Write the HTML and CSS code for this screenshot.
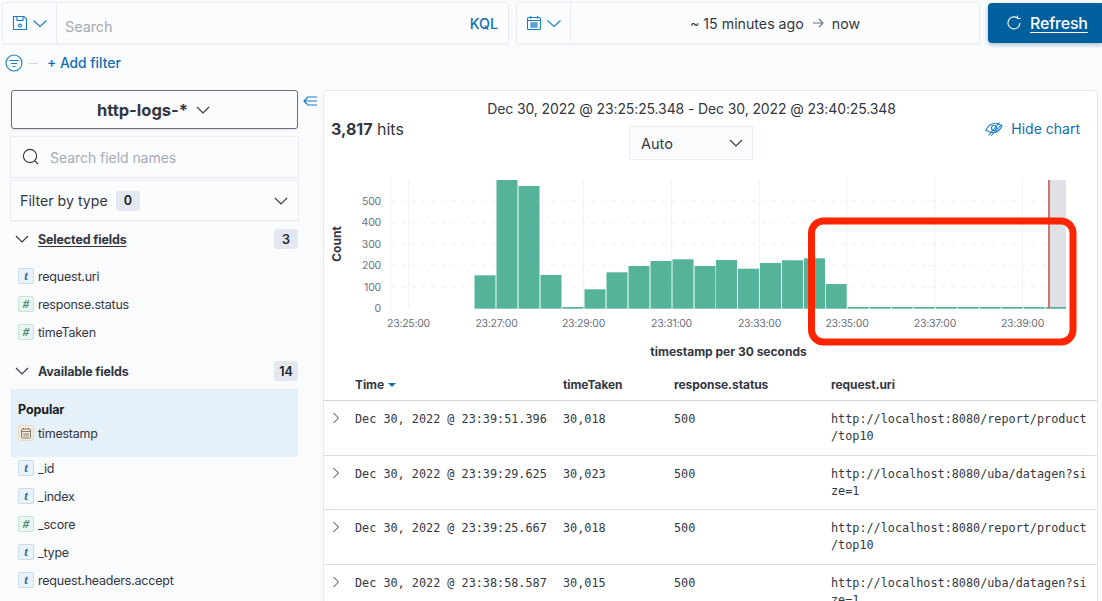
FILE: index.html
```html
<!DOCTYPE html>
<html lang="en">
<head>
<meta charset="utf-8">
<title>Discover</title>
<link rel="stylesheet" href="styles.css">
</head>
<body>
<div class="page">
  <header class="topbar">
    <div class="group query">
      <div class="prepend save">
        <svg class="ico" width="16" height="16" viewBox="0 0 16 16" fill="none" stroke="#1a7cc4" stroke-width="1.1"><path d="M1.500 1.500h10.500l2.500 2.500v10.500h-13z"/><path d="M5 1.500v4h6v-4"/><circle cx="8" cy="10.500" r="1.400"/></svg>
        <svg class="chev" width="14" height="14" viewBox="0 0 14 14" fill="none" stroke="#1a7cc4" stroke-width="1.1"><path d="M.5 4.500 7 10.500l6.500-6"/></svg>
      </div>
      <div class="search-input">Search</div>
      <div class="kql">KQL</div>
    </div>
    <div class="group date">
      <div class="prepend cal">
        <svg width="16" height="16" viewBox="0 0 16 16" fill="none" stroke="#1a7cc4" stroke-width="1.1"><rect x="1.500" y="2.500" width="13" height="12" rx="1"/><path d="M1.500 5.500h13M4.500 1v2.500M11.500 1v2.500"/><path d="M4 8h8M4 10h8M4 12h8M6 7.500v5M8 7.500v5M10 7.500v5" stroke-width=".9"/></svg>
        <svg class="chev" width="14" height="14" viewBox="0 0 14 14" fill="none" stroke="#1a7cc4" stroke-width="1.1"><path d="M.5 4.500 7 10.500l6.500-6"/></svg>
      </div>
      <div class="range"><span>~ 15 minutes ago</span>
        <svg width="12" height="12" viewBox="0 0 12 12" fill="none" stroke="#69707d" stroke-width="1.1"><path d="M1 6h10M7 2l4 4-4 4"/></svg>
        <span>now</span></div>
    </div>
    <button class="refresh">
      <svg width="16" height="16" viewBox="0 0 16 16" fill="none" stroke="#fff" stroke-width="1.1"><path d="M11.500 3A6 6 0 1 0 14 8"/><path d="M11.500 .5V3.500H14.500" stroke-width="1"/></svg>
      <span>Refresh</span>
    </button>
  </header>

  <div class="filterbar">
    <svg width="18" height="18" viewBox="0 0 18 18" fill="none" stroke="#1a7cc4" stroke-width="1.1"><circle cx="9" cy="9" r="8"/><path d="M4.500 6.500h9M6 9.500h6M7.500 12.500h3"/></svg>
    <span class="dash"></span>
    <a class="addfilter">+ Add filter</a>
  </div>

  <div class="content">
    <aside class="sidebar">
      <button class="indexbtn"><span>http-logs-*</span>
        <svg width="14" height="14" viewBox="0 0 14 14" fill="none" stroke="#343741" stroke-width="1.1"><path d="M1 4 7 10l6-6"/></svg>
      </button>
      <div class="fieldsearch">
        <svg width="18" height="18" viewBox="0 0 18 18" fill="none" stroke="#343741" stroke-width="1.1"><circle cx="8" cy="8" r="6.600"/><path d="M13 13l3 3"/></svg>
        <span>Search field names</span>
      </div>
      <div class="filtertype"><span>Filter by type</span><b class="badge">0</b>
        <svg class="push" width="14" height="14" viewBox="0 0 14 14" fill="none" stroke="#343741" stroke-width="1.1"><path d="M1 4 7 10l6-6"/></svg>
      </div>

      <div class="sechead first">
        <svg width="14" height="14" viewBox="0 0 14 14" fill="none" stroke="#343741" stroke-width="1.1"><path d="M1 4 7 10l6-6"/></svg>
        <strong class="under">Selected fields</strong><b class="badge push">3</b>
      </div>
      <ul class="fields sel">
        <li><i class="ft t">t</i>request.uri</li>
        <li><i class="ft n">#</i>response.status</li>
        <li><i class="ft n">#</i>timeTaken</li>
      </ul>

      <div class="sechead second">
        <svg width="14" height="14" viewBox="0 0 14 14" fill="none" stroke="#343741" stroke-width="1.1"><path d="M1 4 7 10l6-6"/></svg>
        <strong>Available fields</strong><b class="badge push">14</b>
      </div>
      <div class="popular">
        <div class="poptitle">Popular</div>
        <div class="popfield"><i class="ft d"><svg width="12" height="12" viewBox="0 0 12 12" fill="none" stroke="#7b705a" stroke-width=".9"><rect x="1.500" y="2" width="9" height="9" rx=".8"/><path d="M1.500 4.500h9M3.500 1v1.500M8.500 1v1.500M4 6v3.500M6 6v3.500M8 6v3.500"/></svg></i>timestamp</div>
      </div>
      <ul class="fields avail">
        <li><i class="ft t">t</i>_id</li>
        <li><i class="ft t">t</i>_index</li>
        <li><i class="ft n">#</i>_score</li>
        <li><i class="ft t">t</i>_type</li>
        <li><i class="ft t">t</i>request.headers.accept</li>
      </ul>
    </aside>

    <div class="collapse">
      <svg width="14" height="10" viewBox="0 0 14 10" fill="none" stroke="#1a7cc4" stroke-width="1.2"><path d="M4 1h10M4 9h10M1 5h13M4.500 1.500 1 5l3.500 3.500"/></svg>
    </div>

    <main class="panel">
      <div class="chartwrap">
        <div class="daterange">Dec 30, 2022 @ 23:25:25.348 - Dec 30, 2022 @ 23:40:25.348</div>
        <div class="chartctl">
          <div class="hits"><b>3,817</b> hits</div>
          <div class="auto"><span>Auto</span>
            <svg width="14" height="14" viewBox="0 0 14 14" fill="none" stroke="#343741" stroke-width="1.1"><path d="M1 4 7 10l6-6"/></svg>
          </div>
          <a class="hide">
            <svg width="18" height="16" viewBox="0 0 18 16" fill="none" stroke="#1a7cc4" stroke-width="1.1"><path d="M1 9.500c1.500-4 5-7 9-7 2 0 4 .5 7 2-1.500 4-5 7-9 7-2 0-4-.5-7-2z"/><circle cx="9" cy="7" r="2.500"/><path d="M3.500 14.500 14.500 1.500M6 15l10-11"/></svg>
            Hide chart</a>
        </div>
        <svg class="chart" width="774" height="193" viewBox="323 170 774 193">
          <g class="grid-v"><path d="M391 180V308M408.500 180V308M496.500 180V308M583.500 180V308M671.500 180V308M759.500 180V308M847 180V308M935 180V308M1022.500 180V308"/></g>
          <g class="grid-h"><path d="M391 201H1066M391 222.500H1066M391 244H1066M391 265.500H1066M391 287H1066"/></g>
          <rect class="shade" x="1049" y="180" width="17" height="128.500"/>
          <g class="bars">
            <rect x="474.500" y="275.300" width="21" height="33.400"/><rect x="496.500" y="180" width="21" height="128.700"/><rect x="518.500" y="186" width="21" height="122.700"/><rect x="540.500" y="275" width="21" height="33.700"/><rect x="562.500" y="307" width="21" height="1.700"/><rect x="584.500" y="289.300" width="21" height="19.400"/><rect x="606.500" y="272.300" width="21" height="36.400"/><rect x="628.500" y="266" width="21" height="42.700"/><rect x="650.500" y="261" width="21" height="47.700"/><rect x="672.500" y="259.300" width="21" height="49.400"/><rect x="694.500" y="266" width="21" height="42.700"/><rect x="716" y="260" width="21" height="48.700"/><rect x="738" y="268.700" width="21" height="40"/><rect x="760" y="263" width="21" height="45.700"/><rect x="782" y="260.300" width="21" height="48.400"/><rect x="804" y="258.300" width="21" height="50.400"/><rect x="825.700" y="284" width="21" height="24.700"/><rect x="847.700" y="307" width="21" height="1.700"/><rect x="869.700" y="307" width="21" height="1.700"/><rect x="891.700" y="307" width="21" height="1.700"/><rect x="913.700" y="307" width="21" height="1.700"/><rect x="935.700" y="307" width="21" height="1.700"/><rect x="957.700" y="307" width="21" height="1.700"/><rect x="979.700" y="307" width="21" height="1.700"/><rect x="1001.700" y="307" width="21" height="1.700"/><rect x="1023.700" y="307" width="21" height="1.700"/><rect x="1045.700" y="307" width="20.300" height="1.700"/>
          </g>
          <rect class="redline" x="1048" y="180" width="2" height="128.700"/>
          <g class="ylab">
            <text x="381" y="204.500">500</text><text x="381" y="226">400</text><text x="381" y="247.500">300</text><text x="381" y="269">200</text><text x="381" y="290.500">100</text><text x="381" y="312">0</text>
          </g>
          <g class="xlab">
            <text x="408.500" y="327">23:25:00</text><text x="496.500" y="327">23:27:00</text><text x="583.500" y="327">23:29:00</text><text x="671.500" y="327">23:31:00</text><text x="759.500" y="327">23:33:00</text><text x="847" y="327">23:35:00</text><text x="935" y="327">23:37:00</text><text x="1022.500" y="327">23:39:00</text>
          </g>
          <text class="axis" transform="translate(341 244) rotate(-90)">Count</text>
          <text class="axis" x="728.500" y="356">timestamp per 30 seconds</text>
          <rect class="callout" x="811.500" y="221" width="261.500" height="121" rx="12"/>
        </svg>
      </div>

      <div class="thead">
        <div></div>
        <div>Time <i class="sort"></i></div>
        <div>timeTaken</div>
        <div>response.status</div>
        <div>request.uri</div>
      </div>
      <div class="row">
        <svg class="exp" width="8" height="12" viewBox="0 0 8 12" fill="none" stroke="#343741" stroke-width="1"><path d="M1.500 1l5 5-5 5"/></svg>
        <div>Dec 30, 2022 @ 23:39:51.396</div><div>30,018</div><div>500</div><div class="uri">http://localhost:8080/report/product<wbr>/top10</div>
      </div>
      <div class="row">
        <svg class="exp" width="8" height="12" viewBox="0 0 8 12" fill="none" stroke="#343741" stroke-width="1"><path d="M1.500 1l5 5-5 5"/></svg>
        <div>Dec 30, 2022 @ 23:39:29.625</div><div>30,023</div><div>500</div><div class="uri">http://localhost:8080/uba/datagen?si<wbr>ze=1</div>
      </div>
      <div class="row">
        <svg class="exp" width="8" height="12" viewBox="0 0 8 12" fill="none" stroke="#343741" stroke-width="1"><path d="M1.500 1l5 5-5 5"/></svg>
        <div>Dec 30, 2022 @ 23:39:25.667</div><div>30,018</div><div>500</div><div class="uri">http://localhost:8080/report/product<wbr>/top10</div>
      </div>
      <div class="row">
        <svg class="exp" width="8" height="12" viewBox="0 0 8 12" fill="none" stroke="#343741" stroke-width="1"><path d="M1.500 1l5 5-5 5"/></svg>
        <div>Dec 30, 2022 @ 23:38:58.587</div><div>30,015</div><div>500</div><div class="uri">http://localhost:8080/uba/datagen?si<wbr>ze=1</div>
      </div>
    </main>
  </div>
</div>
</body>
</html>
```

FILE: styles.css
```css
* { box-sizing: border-box; }
html, body { margin: 0; padding: 0; }
body { background: #fafbfd; color: #343741; font-family: Inter, "Liberation Sans", sans-serif; font-size: 14px; }
.page { width: 1102px; height: 601px; overflow: hidden; }
svg { display: block; flex: none; }

.topbar { display: flex; gap: 9px; padding: 3px 0 0 3px; height: 43px; }
.group { display: flex; align-items: center; height: 40px; background: #fbfcfe; box-shadow: 0 0 0 1px #e9edf3, 0 1px 2px rgba(152,162,179,.25); border-radius: 2px; }
.query { width: 505px; }
.date { width: 462px; }
.prepend { display: flex; align-items: center; gap: 5px; height: 100%; border-right: 1px solid #e6eaf1; }
.save { width: 54px; padding-left: 9px; }
.cal { width: 54px; padding-left: 9px; }
.search-input { flex: 1; padding: 6px 0 0 8px; font-size: 14.500px; letter-spacing: -.12px; color: #a6abb4; }
.kql { padding-right: 10px; font-size: 14.200px; font-weight: 500; color: #0f6fb5; }
.range { flex: 1; display: flex; justify-content: center; align-items: center; gap: 8px; font-size: 14.200px; color: #343741; }
.refresh { display: flex; align-items: center; gap: 8px; width: 114px; height: 40px; border: 0; border-radius: 4px 0 0 4px; background: #005f9d; color: #fff; padding: 0 0 0 18px; font: 500 16px Inter, sans-serif; letter-spacing: -.2px; box-shadow: 0 2px 4px rgba(0,60,110,.3); }
.refresh span { text-decoration: underline; text-underline-offset: 3px; }

.filterbar { display: flex; align-items: center; height: 40px; padding-left: 5px; }
.dash { width: 10px; height: 1px; background: #d3dae6; margin: 0 9px 0 5px; }
.addfilter { color: #0f6fb5; font-size: 13.800px; font-weight: 500; }

.content { display: flex; align-items: flex-start; padding: 7px 0 0 11px; }
.sidebar { width: 287px; flex: none; }
.indexbtn { display: flex; align-items: center; justify-content: center; gap: 8px; width: 100%; height: 39px; background: #fbfcfe; border: 1px solid #6a6e78; border-radius: 3px; font: 700 16.500px Inter, sans-serif; color: #343741; box-shadow: 0 1px 2px rgba(0,0,0,.1); padding: 0 2px 0 0; }
.fieldsearch { display: flex; align-items: center; gap: 10px; height: 40px; margin-top: 8px; padding-left: 11px; background: #fbfcfe; box-shadow: 0 0 0 1px #e9edf3, 0 1px 2px rgba(152,162,179,.2); font-size: 14px; letter-spacing: -.05px; color: #a6abb4; }
.filtertype { display: flex; align-items: center; gap: 8px; height: 39px; margin-top: 4px; padding: 0 10px 0 9px; background: #fbfcfe; box-shadow: 0 0 0 1px #e9edf3, 0 1px 2px rgba(152,162,179,.2); font-size: 14.200px; color: #343741; }
.badge { display: inline-flex; justify-content: center; align-items: center; min-width: 24px; height: 20px; padding: 0 4px; background: #e3e8f0; border-radius: 3px; font-size: 12.500px; font-weight: 600; color: #1a1c21; }
.push { margin-left: auto; }

.sechead { display: flex; align-items: center; gap: 9px; height: 20px; padding-left: 4px; font-size: 12.500px; letter-spacing: -.15px; }
.sechead strong { font-weight: 700; color: #343741; }
.sechead .badge { letter-spacing: 0; }
.first { margin-top: 9px; }
.second { margin-top: 15px; }
.under { text-decoration: underline; text-underline-offset: 2px; }

.fields { list-style: none; margin: 0; padding: 0 0 0 7px; font-size: 12.500px; letter-spacing: -.22px; color: #343741; }
.fields li { display: flex; align-items: center; gap: 4px; height: 28px; }
.sel { margin-top: 13px; }
.ft { display: flex; justify-content: center; align-items: center; width: 16px; height: 16px; border-radius: 3px; font: italic 700 13px "Liberation Serif", serif; letter-spacing: 0; }
.ft.t { background: #e9f2f8; box-shadow: inset 0 0 0 1px #c8dcea; color: #3a6e94; }
.ft.n { background: #e8f5f0; box-shadow: inset 0 0 0 1px #c5e6da; color: #44826b; }
.ft.d { background: #f2ece0; box-shadow: inset 0 0 0 1px #e6dcc9; }

.popular { height: 68px; margin-top: 8px; padding: 13px 7px 0; background: #e6f0f8; font-size: 12.500px; letter-spacing: -.22px; }
.poptitle { font-weight: 700; color: #1a1c21; font-size: 12.500px; line-height: 16px; letter-spacing: -.1px; }
.popfield { display: flex; align-items: center; gap: 4px; margin-top: 7px; height: 16px; color: #343741; }
.avail { margin-top: -3px; }

.collapse { width: 25px; flex: none; padding: 6px 0 0 5px; }
.panel { flex: none; width: 775px; height: 520px; background: #fff; border: 1px solid #e3e8f0; border-radius: 4px 4px 0 0; }
.chartwrap { position: relative; height: 279px; }
.daterange { text-align: center; padding: 9px 38px 0 0; line-height: 18px; font-size: 14px; letter-spacing: -.12px; color: #343741; }
.chartctl { display: flex; align-items: flex-start; justify-content: space-between; padding: 0 17px 0 7px; }
.hits { font-size: 16px; padding-top: 1px; line-height: 20px; }
.hits b { font-weight: 700; }
.auto { position: absolute; left: 306px; top: 36px; display: flex; justify-content: space-between; align-items: center; width: 122px; height: 32px; padding: 0 9px 0 11px; background: #fafbfd; box-shadow: 0 0 0 1px #e9edf3; font-size: 14.500px; }
.hide { display: flex; align-items: center; gap: 8px; color: #0f6fb5; font-size: 14px; font-weight: 400; line-height: 22px; }
.chart { position: absolute; left: -1px; top: 79px; }
.grid-v path { stroke: #f2f3f5; fill: none; }
.grid-h path { stroke: #eef0f3; stroke-dasharray: 5 5; fill: none; }
.shade { fill: #dfe1e6; }
.bars rect { fill: #54b399; }
.redline { fill: #cd7470; }
.ylab text { font: 10.500px Inter, sans-serif; letter-spacing: -.2px; fill: #69707d; text-anchor: end; }
.xlab text { font: 10.500px Inter, sans-serif; letter-spacing: -.25px; fill: #69707d; text-anchor: middle; }
.axis { font: 700 12px Inter, sans-serif; fill: #343741; text-anchor: middle; }
.callout { fill: none; stroke: #ff2500; stroke-width: 7; }

.thead, .row { display: grid; grid-template-columns: 31px 208px 111px 157px 1fr; }
.thead { height: 31px; padding-bottom: 2px; align-items: center; font-size: 12px; letter-spacing: -.08px; font-weight: 700; color: #343741; border-bottom: 1px solid #d3dae6; }
.sort { display: inline-block; vertical-align: middle; width: 0; height: 0; margin-left: 1px; border: 4px solid transparent; border-top-color: #0f6fb5; border-bottom: 0; }
.row { height: 54.500px; padding-top: 10px; font: 11.800px/17px "DejaVu Sans Mono", monospace; color: #343741; border-bottom: 1px solid #d9dfea; }
.uri { word-break: break-all; width: 262px; }
.exp { margin: 1px 0 0 8px; }
```
